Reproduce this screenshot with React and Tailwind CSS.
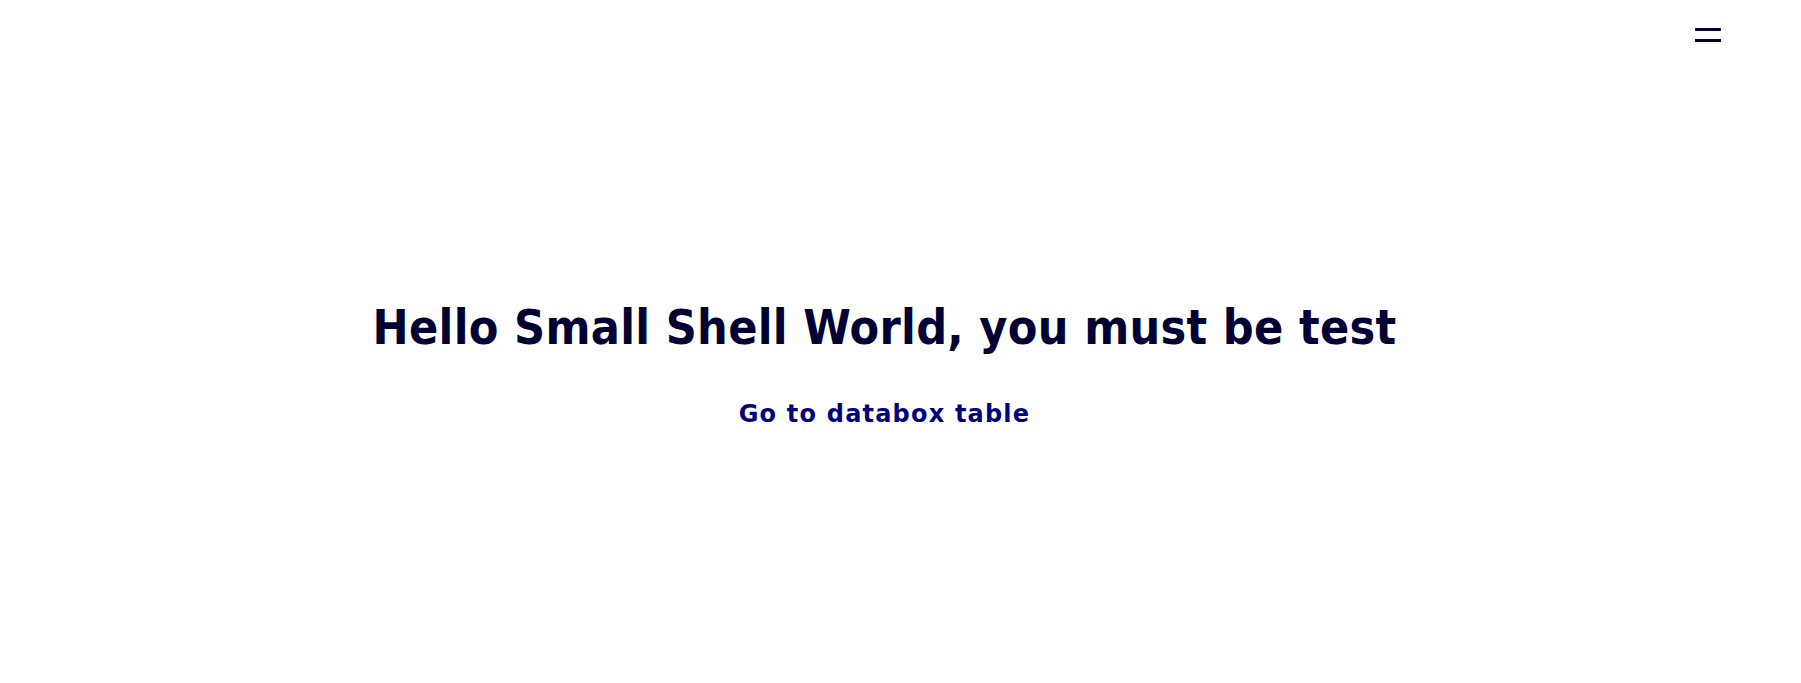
import React from 'react';

export default function App() {
  return (
    <div className="min-h-[683px] bg-white font-['DejaVu_Sans',sans-serif] text-[#000033] flex flex-col">
      <header className="flex justify-end pt-[27.75px] pr-[80px]">
        <button className="flex flex-col gap-[7.5px] w-[26px]" aria-label="menu">
          <span className="block h-[3.5px] w-full bg-[#000033]"></span>
          <span className="block h-[3.5px] w-full bg-[#000033]"></span>
        </button>
      </header>
      <main className="flex flex-col items-center pt-[261px] pr-[32px]">
        <h1 className="font-['DejaVu_Sans_Condensed','DejaVu_Sans',sans-serif] font-stretch-condensed text-[48px] font-bold leading-none tracking-[0.3px]">Hello Small Shell World, you must be test</h1>
        <a href="#" className="mt-[45px] text-[24px] font-bold text-[#000080] tracking-[1.2px]">Go to databox table</a>
      </main>
    </div>
  );
}
